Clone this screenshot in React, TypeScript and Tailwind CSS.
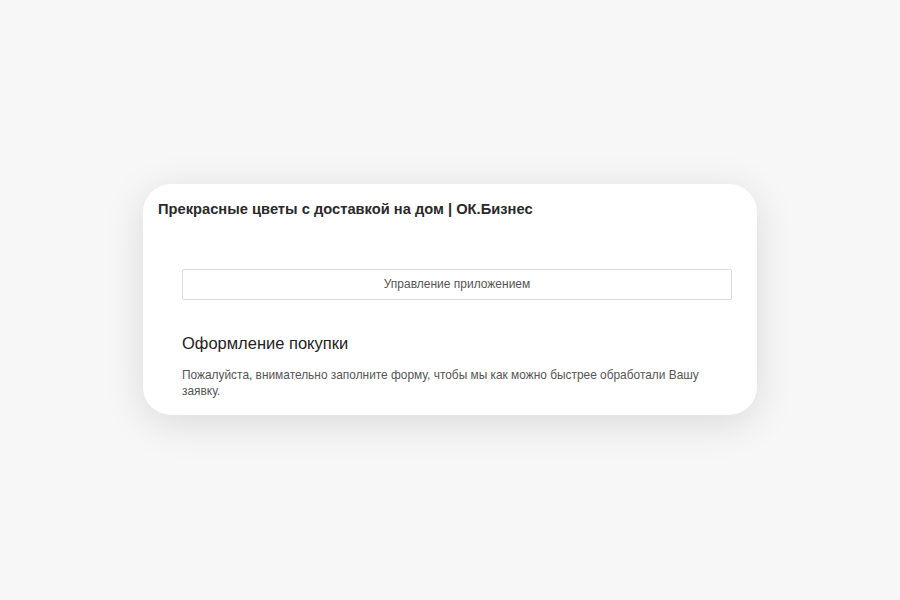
import React from "react";

export default function App() {
  return (
    <div className="w-[900px] h-[600px] bg-[#f7f7f7] flex items-center justify-center [font-family:'Liberation_Sans',Arial,sans-serif]">
      {/* Card */}
      <div className="w-[614px] h-[231px] -mt-[2px] bg-white rounded-[28px] shadow-[0_8px_40px_rgba(0,0,0,0.12)] overflow-hidden pt-[16px] pl-[15px] pr-[25px]">
        <h1 className="text-[14.7px] leading-[18px] font-bold text-[#2a2a2a]">
          Прекрасные цветы с доставкой на дом | ОК.Бизнес
        </h1>

        <div className="pl-[24px] mt-[51px]">
          <button className="w-full h-[31px] border border-[#dcdcdc] rounded-[2px] bg-white text-[12px] text-[#555] flex items-center justify-center">
            Управление приложением
          </button>

          <h2 className="mt-[32px] text-[16.5px] leading-[22px] text-[#222]">
            Оформление покупки
          </h2>
          <p className="mt-[13px] text-[11.9px] leading-[16px] text-[#555]">
            Пожалуйста, внимательно заполните форму, чтобы мы как можно быстрее обработали Вашу заявку.
          </p>
        </div>
      </div>
    </div>
  );
}
